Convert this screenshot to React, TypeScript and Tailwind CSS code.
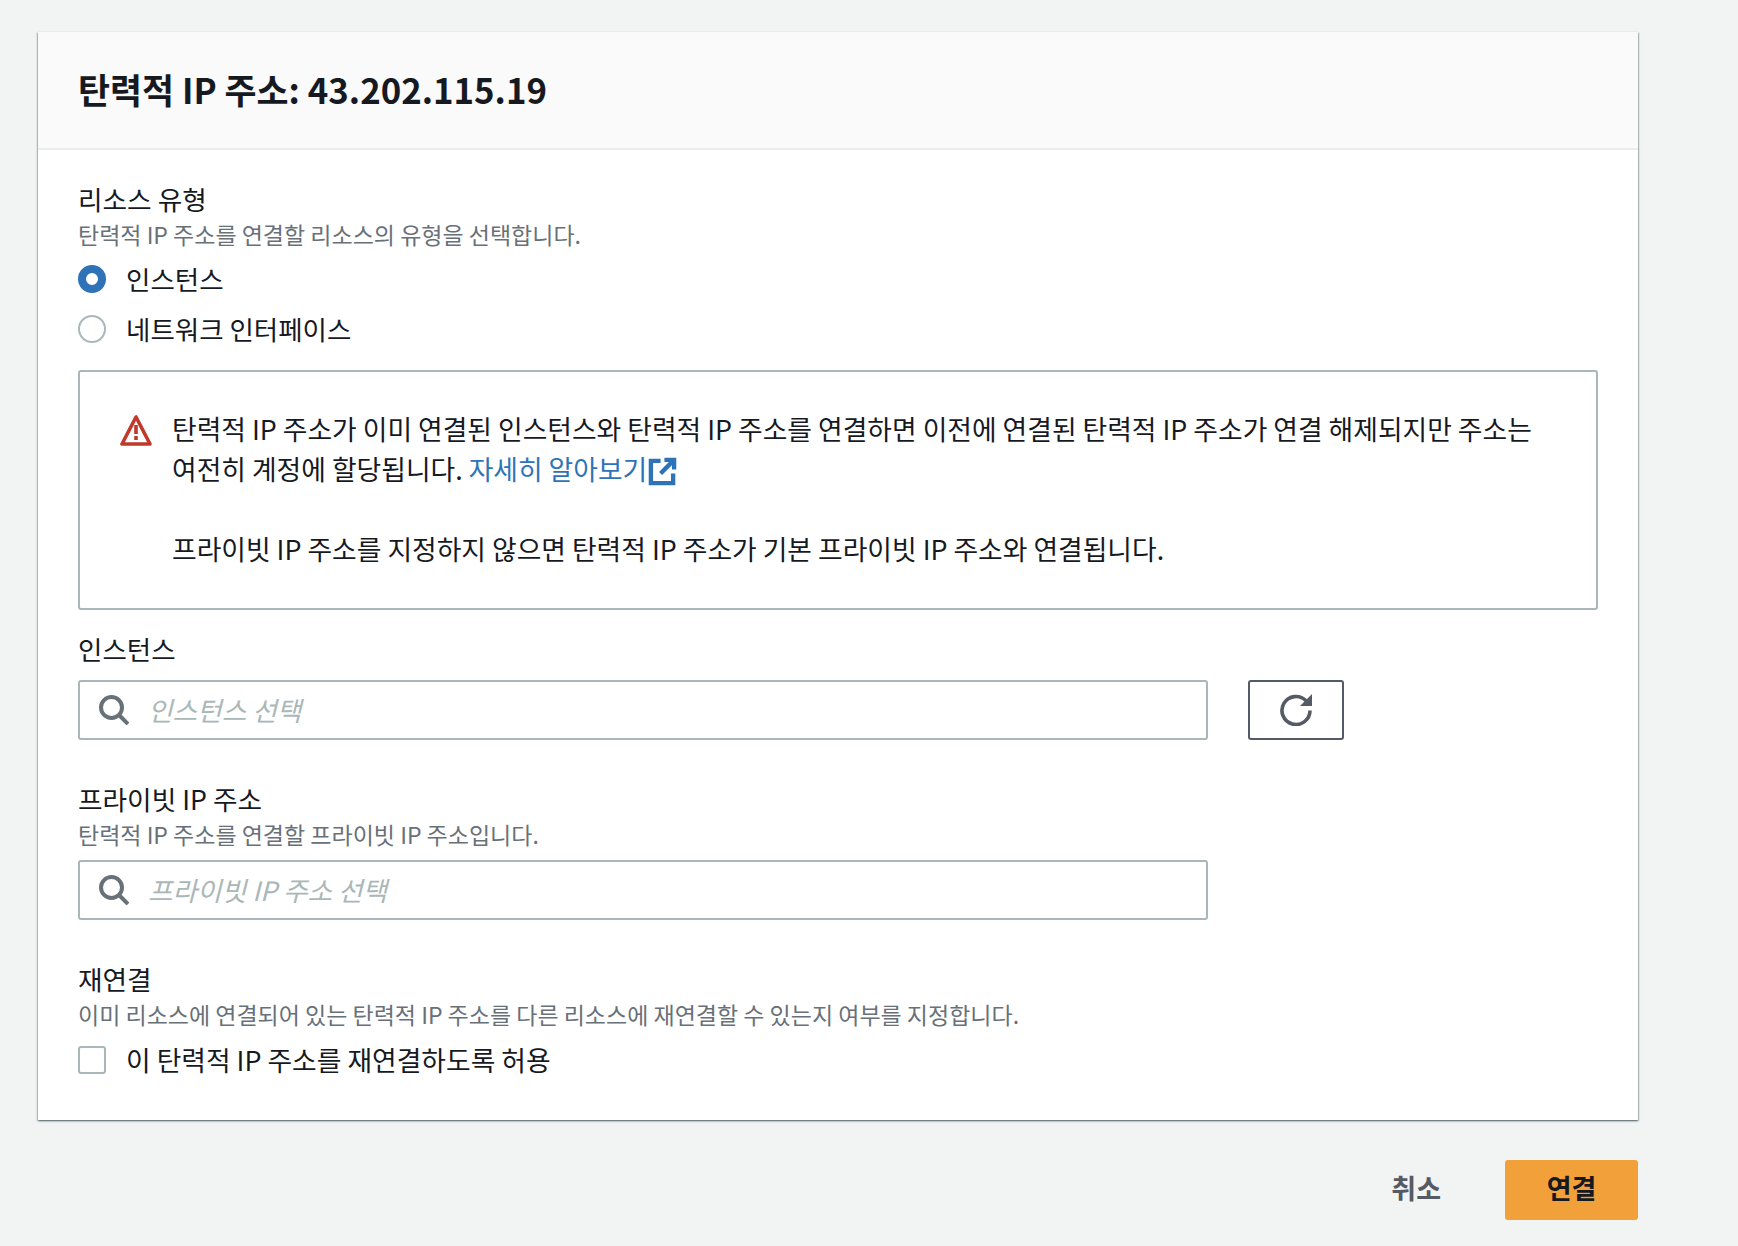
const font = "font-['Noto_Sans_CJK_KR',sans-serif]"

function SearchInput({ placeholder }: { placeholder: string }) {
  return (
    <div className="flex h-[60px] w-[1130px] items-center rounded-[3px] border-2 border-[#aab7b8] bg-white pl-[19px]">
      <svg width="30" height="30" viewBox="0 0 30 30" fill="none" stroke="#687078" strokeWidth="4" className="shrink-0">
        <circle cx="12.5" cy="12.5" r="10.5" />
        <path d="M20 20l9 9" />
      </svg>
      <span className="ml-[19px] text-[26.7px] italic leading-[36px] text-[#aab7b8]">{placeholder}</span>
    </div>
  )
}

export default function App() {
  return (
    <div className={`${font} min-h-[1246px] bg-[#f2f3f3] pt-8 pl-[38px] text-[#16191f]`}>
      <div className="w-[1600px] bg-white shadow-[0_1px_2px_rgba(0,28,36,0.5),1px_1px_1px_rgba(0,28,36,0.15),-1px_1px_1px_rgba(0,28,36,0.15)]">
        <div className="flex h-[118px] items-center border-b-2 border-[#eaeded] bg-[#fafafa] px-10 pb-[3px]">
          <h1 className="text-[34.8px] font-bold leading-[44px]">탄력적 IP 주소: 43.202.115.19</h1>
        </div>
        <div className="flex flex-col px-10 pt-[31px] pb-[37px]">
          <div className="text-[26.7px] leading-[36px]">리소스 유형</div>
          <div className="text-[23px] leading-[34px] text-[#687078]">탄력적 IP 주소를 연결할 리소스의 유형을 선택합니다.</div>
          <div className="mt-[5px] flex h-[46px] items-center">
            <span className="flex size-7 items-center justify-center rounded-full border-[8px] border-[#2e73b8] bg-white" />
            <span className="ml-5 text-[26.5px] leading-[36px]">인스턴스</span>
          </div>
          <div className="mt-[4px] flex h-[46px] items-center">
            <span className="size-7 rounded-full border-2 border-[#aab7b8] bg-white" />
            <span className="ml-5 text-[26.5px] leading-[36px]">네트워크 인터페이스</span>
          </div>
          <div className="mt-[18px] flex h-[240px] w-[1520px] rounded-[3px] border-2 border-[#aab7b8] px-10 pt-[37px]">
            <svg width="32" height="32" viewBox="0 0 32 32" className="mt-[5px] shrink-0">
              <path d="M16 3L2 30h28z" fill="none" stroke="#c0392b" strokeWidth="3.6" strokeLinejoin="round" />
              <path d="M14.2 11h3.6v9h-3.6zM14.2 22h3.6v4h-3.6z" fill="#c0392b" />
            </svg>
            <div className="ml-5 break-keep text-[26.8px] leading-[40px]">
              <p>
                탄력적 IP 주소가 이미 연결된 인스턴스와 탄력적 IP 주소를 연결하면 이전에 연결된 탄력적 IP 주소가 연결 해제되지만 주소는 여전히 계정에 할당됩니다.{" "}
                <span className="text-[#2e73b8]">자세히 알아보기</span>
                <svg width="29" height="29" viewBox="0 0 30 30" fill="none" stroke="#2e73b8" strokeWidth="4.5" className="ml-[1px] inline-block align-[-6px]">
                  <path d="M13 4H3v23h23V17" />
                  <path d="M17 3h10v10M27 3L13 17" />
                </svg>
              </p>
              <p className="mt-10">프라이빗 IP 주소를 지정하지 않으면 탄력적 IP 주소가 기본 프라이빗 IP 주소와 연결됩니다.</p>
            </div>
          </div>
          <div className="mt-[21px] text-[26.5px] leading-[36px]">인스턴스</div>
          <div className="mt-[13px] flex items-center gap-10">
            <SearchInput placeholder="인스턴스 선택" />
            <div className="flex h-[60px] w-[96px] items-center justify-center rounded-[3px] border-2 border-[#545b64]">
              <svg width="32" height="32" viewBox="0 0 32 32" fill="none" stroke="#545b64" strokeWidth="3.6">
                <path d="M30 16.5A14 14 0 1 1 26 6.7" />
                <path d="M32 0v12H20z" fill="#545b64" stroke="none" />
              </svg>
            </div>
          </div>
          <div className="mt-[41px] text-[26.7px] leading-[36px]">프라이빗 IP 주소</div>
          <div className="text-[23px] leading-[34px] text-[#687078]">탄력적 IP 주소를 연결할 프라이빗 IP 주소입니다.</div>
          <div className="mt-[9px]">
            <SearchInput placeholder="프라이빗 IP 주소 선택" />
          </div>
          <div className="mt-[41px] text-[26.7px] leading-[36px]">재연결</div>
          <div className="text-[23px] leading-[34px] text-[#687078]">이미 리소스에 연결되어 있는 탄력적 IP 주소를 다른 리소스에 재연결할 수 있는지 여부를 지정합니다.</div>
          <div className="mt-[6px] flex h-[46px] items-center">
            <span className="size-7 rounded-[3px] border-2 border-[#aab7b8] bg-white" />
            <span className="ml-5 text-[26.8px] leading-[36px]">이 탄력적 IP 주소를 재연결하도록 허용</span>
          </div>
        </div>
      </div>
      <div className="mt-10 flex w-[1600px] items-center justify-end">
        <button className="mr-6 px-10 pb-[3px] text-[27px] font-bold text-[#545b64]">취소</button>
        <button className="h-[60px] w-[133px] rounded-[3px] bg-[#f2a039] pb-[3px] text-[27px] font-bold">연결</button>
      </div>
    </div>
  )
}
